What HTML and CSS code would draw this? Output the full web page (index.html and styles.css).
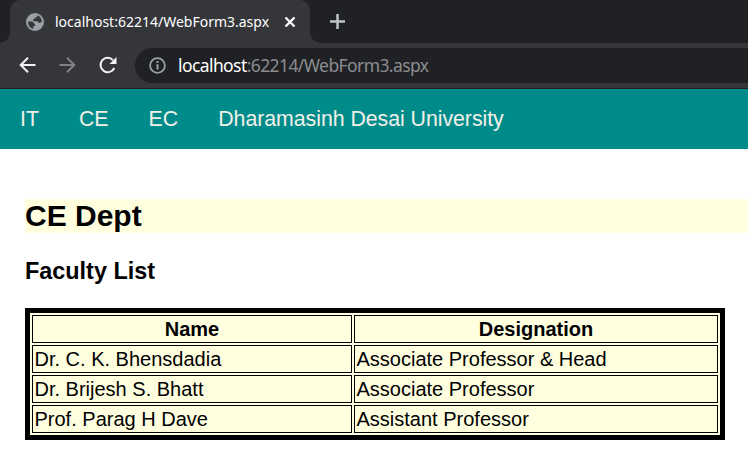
FILE: index.html
```html
<!DOCTYPE html>
<html lang="en">
<head>
<meta charset="utf-8">
<title>CE Dept</title>
<link rel="stylesheet" href="styles.css">
</head>
<body>
<header class="browser">
  <div class="tabs">
    <div class="tab">
      <svg class="globe" width="18" height="18" viewBox="0 0 18 18"><circle cx="9" cy="9" r="9" fill="#9aa0a6"/><path d="M2.100 8.400 5 8.600c1.800 0 2.600.6 2.800 1.900.9.1 1.300.6 1.300 1.500v1.100H7.300v2.700C4.200 15.100 2 12.300 2.100 8.400ZM11.200 2.300c2.500.8 4.400 3 4.700 5.700-.5 1.200-1.200 1.700-2.100 1.700-1.100 0-1.800-.5-2-1.500H8.100c-1-.2-1.200-1.700-.3-2.300.4-.3.9-.4 1.500-.4.1-1 .5-1.400 1.300-1.500.5-.3.7-.9.6-1.700Z" fill="#35363a"/></svg>
      <span class="tab-title">localhost:62214/WebForm3.aspx</span>
      <svg class="close" width="12" height="12" viewBox="0 0 12 12"><path d="m1.500 1.500 9 9m0-9-9 9" stroke="#fff" stroke-width="2.300" fill="none"/></svg>
    </div>
    <svg class="plus" width="16" height="16" viewBox="0 0 16 16"><path d="M8.500 1v15M1 8.500h15" stroke="#bdc1c6" stroke-width="2.500" fill="none"/></svg>
  </div>
  <div class="toolbar">
    <svg class="back" width="18" height="18" viewBox="0 0 18 18"><path d="M16.500 9H2M9 1.700 1.700 9 9 16.300" stroke="#f1f3f4" stroke-width="2" fill="none"/></svg>
    <svg class="forward" width="18" height="18" viewBox="0 0 18 18"><path d="M.5 9H15M8 1.700 15.300 9 8 16.300" stroke="#808185" stroke-width="2" fill="none"/></svg>
    <svg class="reload" width="18" height="18" viewBox="0 0 18 18"><path d="M15.300 12A7.200 7.200 0 1 1 14 4.100" stroke="#f1f3f4" stroke-width="2" fill="none"/><path d="M17.500 1v7h-7Z" fill="#f1f3f4"/></svg>
    <div class="address">
      <svg class="info" width="18" height="18" viewBox="0 0 18 18"><circle cx="9.500" cy="9.500" r="7.400" stroke="#9aa0a6" stroke-width="1.800" fill="none"/><path d="M9.500 5v2M9.500 8.300v5.200" stroke="#9aa0a6" stroke-width="2"/></svg>
      <span class="url"><span class="host">localhost</span>:62214/WebForm3.aspx</span>
    </div>
  </div>
</header>
<nav class="nav">
  <a>IT</a><a>CE</a><a>EC</a><a class="university">Dharamasinh Desai University</a>
</nav>
<main class="content">
  <h1>CE Dept</h1>
  <h3>Faculty List</h3>
  <table>
    <tr><th class="name">Name</th><th>Designation</th></tr>
    <tr><td>Dr. C. K. Bhensdadia</td><td>Associate Professor &amp; Head</td></tr>
    <tr><td>Dr. Brijesh S. Bhatt</td><td>Associate Professor</td></tr>
    <tr><td>Prof. Parag H Dave</td><td>Assistant Professor</td></tr>
  </table>
</main>
</body>
</html>
```
FILE: styles.css
```css
* { box-sizing: border-box; }
body {
  margin: 0;
  background: #fff;
  color: #000;
  font-family: "Liberation Sans", Arial, sans-serif;
  overflow: hidden;
}
svg { display: block; flex: none; }
.browser {
  height: 89px;
  background: #35363a;
  border-bottom: 1px solid #202124;
  font-family: "Noto Sans", "Open Sans", sans-serif;
}
.tabs {
  display: flex;
  height: 43px;
  background: #202124;
  padding-left: 10px;
}
.tab {
  position: relative;
  display: flex;
  align-items: center;
  width: 300px;
  height: 43px;
  padding-left: 16px;
  background: #35363a;
  border-radius: 10px 10px 0 0;
}
.tab::before, .tab::after {
  content: "";
  position: absolute;
  bottom: 0;
  width: 10px;
  height: 10px;
}
.tab::before {
  left: -10px;
  background: radial-gradient(circle at 0 0, #202124 9.500px, #35363a 10px);
}
.tab::after {
  right: -10px;
  background: radial-gradient(circle at 100% 0, #202124 9.500px, #35363a 10px);
}
.tab-title {
  width: 230px;
  margin-left: 11px;
  color: #fff;
  font-size: 14px;
  line-height: 20px;
  white-space: nowrap;
}
.close { margin-left: -1px; }
.plus { margin: 13px 0 0 19px; }
.toolbar {
  display: flex;
  align-items: center;
  height: 45px;
  padding: 0 0 1px 19px;
}
.forward { margin-left: 22px; }
.reload { margin-left: 22px; }
.address {
  display: flex;
  align-items: center;
  flex: 1;
  height: 35px;
  margin-left: 18px;
  padding-left: 13px;
  background: #202124;
  border-radius: 18px 0 0 18px;
}
.url {
  margin-left: 12px;
  color: #8b8d91;
  font-size: 17.500px;
  letter-spacing: -0.590px;
  line-height: 24px;
  white-space: nowrap;
}
.host { color: #fff; }
.nav {
  display: flex;
  gap: 40px;
  height: 60px;
  padding-left: 20px;
  background: #008b8b;
  color: #f0f0e8;
  font-size: 21.330px;
  line-height: 60px;
}
.university { letter-spacing: -0.050px; }
.content {
  padding: 50px 0 0 25px;
  font-size: 20px;
}
h1 {
  margin: 0;
  height: 34px;
  background: #ffffe0;
  font-size: 30px;
  line-height: 34px;
}
h3 {
  margin: 25px 0 23px;
  font-size: 23.400px;
  line-height: 27px;
}
table {
  width: 700px;
  table-layout: fixed;
  border: 5px solid #000;
  border-collapse: separate;
  border-spacing: 2px;
  background: #ffffe0;
}
th, td {
  height: 28px;
  padding: 1px;
  border: 1px solid #000;
  line-height: 24px;
  white-space: nowrap;
}
td { padding-left: 1.500px; }
.name { width: 320px; }
```
